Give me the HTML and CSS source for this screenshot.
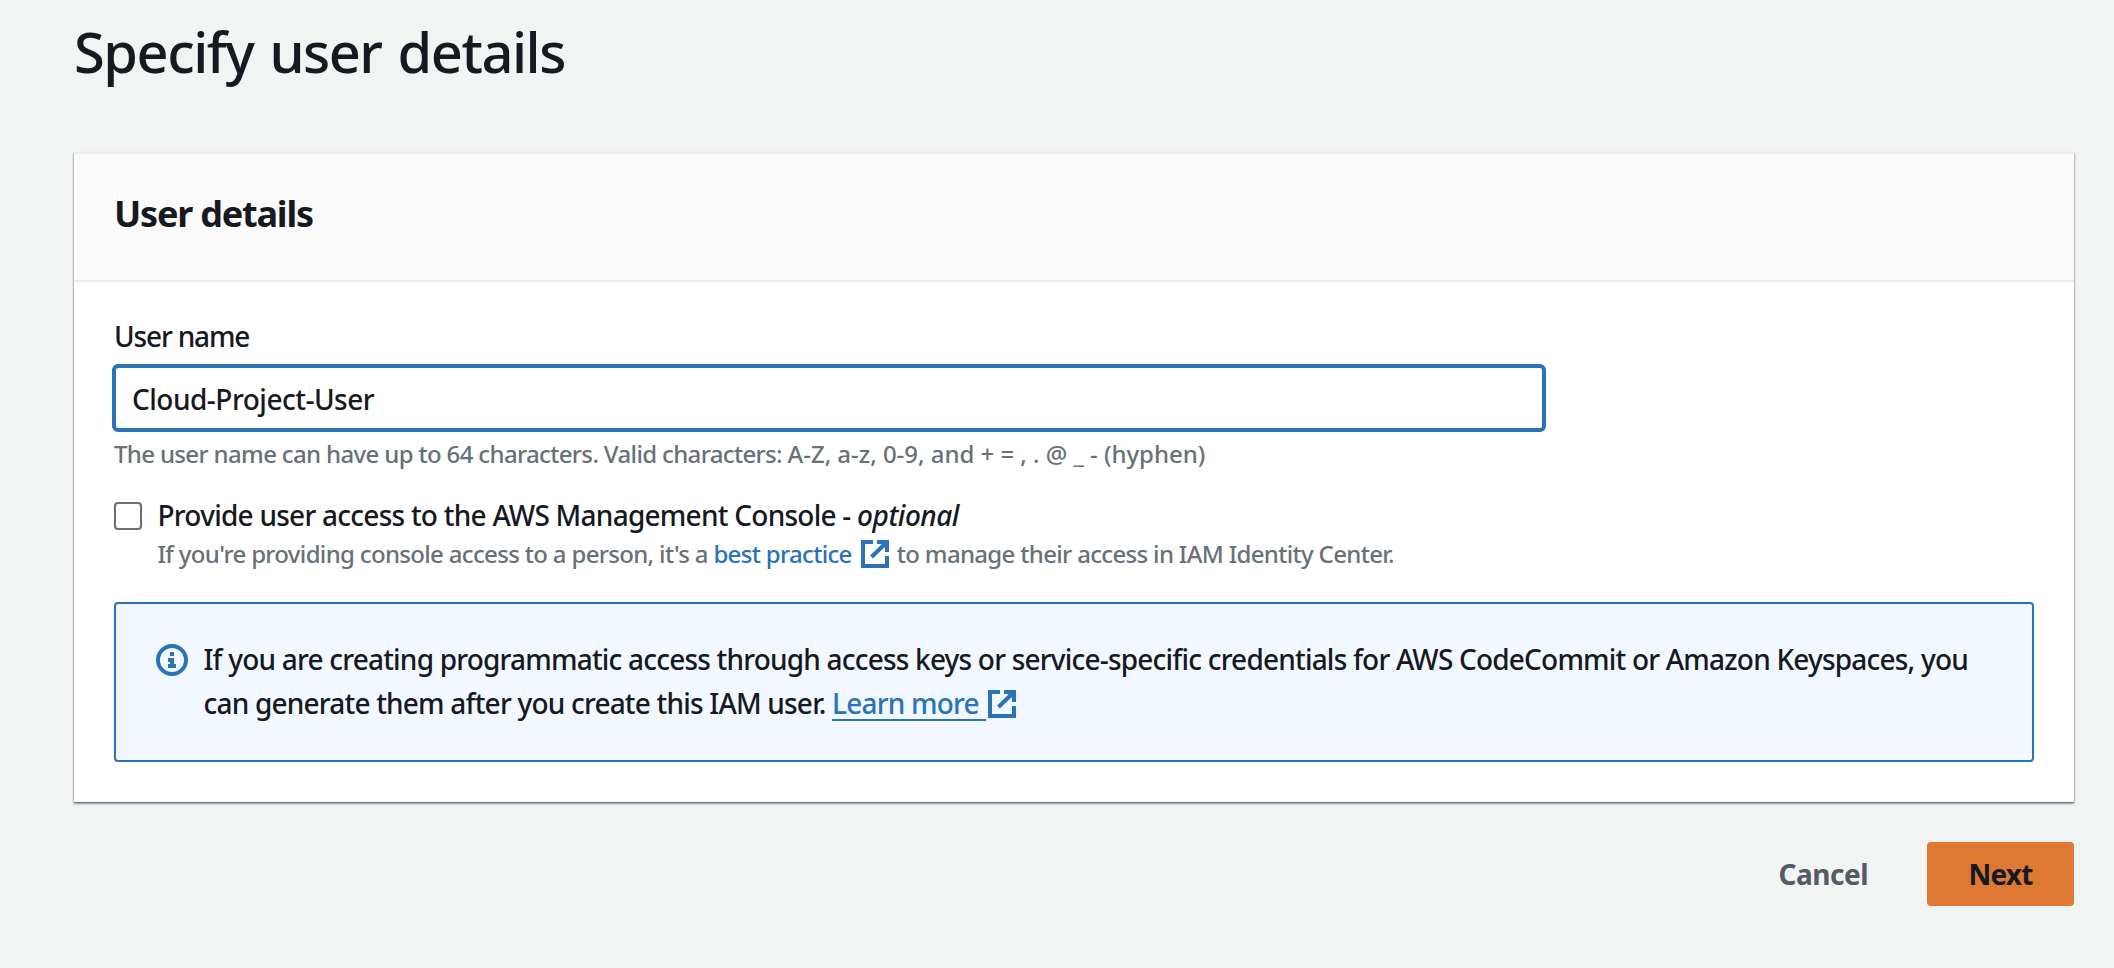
FILE: index.html
```html
<!DOCTYPE html>
<html lang="en">
<head>
<meta charset="utf-8">
<title>Specify user details</title>
<link rel="stylesheet" href="styles.css">
</head>
<body>
<main class="page">
  <h1 class="page-title">Specify user details</h1>
  <section class="card">
    <header class="card-header"><h2 class="card-title">User details</h2></header>
    <div class="card-body">
      <label class="field-label" for="username">User name</label>
      <input class="field-input" id="username" type="text" value="Cloud-Project-User">
      <p class="field-hint">The user name can have up to 64 characters. Valid characters: <span class="charset">A-Z, a-z, 0-9, and + = , . @ _ - (hyphen)</span></p>
      <div class="option">
        <span class="checkbox" role="checkbox" aria-checked="false"></span>
        <div class="option-text">
          <div class="option-label">Provide user access to the AWS Management Console - <em class="optional">optional</em></div>
          <div class="option-desc">If you're providing console access to a person, it's a <a class="link" href="#">best practice</a><svg class="external" viewBox="0 0 28 28"><path d="M12 2H2V26H26V16M16 2H26V12M26 2L10.500 17" fill="none" stroke="currentColor" stroke-width="4"/><path d="M19 3h6v6z" fill="currentColor"/></svg>to manage their access in IAM Identity Center.</div>
        </div>
      </div>
      <div class="alert">
        <svg class="info" viewBox="0 0 32 32"><circle cx="16" cy="16" r="14" fill="none" stroke="currentColor" stroke-width="4"/><path d="M14 8h4v4h-4zM12 14h6v6h2v4h-8v-4h2v-2h-2z" fill="currentColor"/></svg>
        <p class="alert-text">If you are creating programmatic access through access keys or service-specific credentials for AWS CodeCommit or Amazon Keyspaces, you<br>can generate them after you create this IAM user. <a class="link link-underlined" href="#">Learn more</a><svg class="external external-alert" viewBox="0 0 28 28"><path d="M12 2H2V26H26V16M16 2H26V12M26 2L10.500 17" fill="none" stroke="currentColor" stroke-width="4"/><path d="M19 3h6v6z" fill="currentColor"/></svg></p>
      </div>
    </div>
  </section>
  <footer class="actions">
    <button class="btn btn-link" type="button">Cancel</button>
    <button class="btn btn-primary" type="button">Next</button>
  </footer>
</main>
</body>
</html>
```
FILE: styles.css
```css
* { box-sizing: border-box; }

body {
  margin: 0;
  background: #f2f3f3;
  color: #16191f;
  font: 500 28px/44px "Noto Sans", "Open Sans", sans-serif;
}

h1, h2, p { margin: 0; }

.page { padding: 15px 40px 0 74px; }

.page-title {
  font-size: 56px;
  font-weight: 500;
  line-height: 72px;
  letter-spacing: -1.5px;
  word-spacing: 3px;
}

.card {
  height: 650px;
  margin-top: 65px;
  background: #fff;
  border-top: 2px solid #eaeded;
  box-shadow: 0 2px 2px 0 rgba(0, 28, 54, .3), 1px 1px 2px 0 rgba(0, 28, 54, .15), -1px 1px 2px 0 rgba(0, 28, 54, .15), 0 1px 1px 0 rgba(0, 28, 54, .25);
}

.card-header {
  height: 128px;
  padding: 38px 40px 0;
  background: #fafafa;
  border-bottom: 2px solid #eaeded;
}

.card-title {
  font-size: 36px;
  font-weight: 700;
  line-height: 44px;
  letter-spacing: -1.2px;
}

.card-body { padding: 32px 40px 40px; }

.field-label {
  display: block;
  letter-spacing: -1.15px;
}

.field-input {
  display: block;
  width: 1434px;
  height: 68px;
  margin: 6px 0 0 -2px;
  padding: 1px 16px 0;
  border: 4px solid #2a73b8;
  border-radius: 6px;
  outline: none;
  background: #fff;
  color: inherit;
  font: inherit;
  letter-spacing: -.5px;
}

.field-hint {
  margin-top: 6px;
  color: #687078;
  font-size: 24px;
  line-height: 32px;
  letter-spacing: -.65px;
}

.charset { letter-spacing: -.03px; }

.option {
  display: flex;
  gap: 15.5px;
  margin-top: 23px;
}

.checkbox {
  width: 28px;
  height: 28px;
  margin-top: 9px;
  border: 2px solid #687078;
  border-radius: 4px;
  background: #fff;
}

.option-label { letter-spacing: -.75px; }

.optional { letter-spacing: -.5px; }

.option-desc {
  margin-top: 1px;
  color: #687078;
  font-size: 24px;
  line-height: 32px;
  letter-spacing: -.67px;
  white-space: nowrap;
}

.link {
  color: #2a73b8;
  text-decoration: none;
}

.external {
  width: 28px;
  height: 28px;
  margin: 0 8px 0 9px;
  color: #2a73b8;
  vertical-align: -5px;
}

.alert {
  display: flex;
  gap: 15.5px;
  height: 160px;
  margin-top: 32px;
  padding: 33px 40px 0;
  border: 2px solid #2a73b8;
  border-radius: 4px;
  background: #f1f8ff;
}

.info {
  flex: none;
  width: 32px;
  height: 32px;
  margin-top: 7px;
  color: #2a73b8;
}

.alert-text {
  letter-spacing: -.8px;
  white-space: nowrap;
}

.link-underlined {
  padding-right: 7px;
  background: linear-gradient(#2a73b8, #2a73b8) 0 calc(100% - 1px) / 100% 2px no-repeat;
}

.external-alert { margin-left: 2px; vertical-align: -4px; }

.actions {
  display: flex;
  justify-content: flex-end;
  gap: 19px;
  margin-top: 40px;
}

.btn {
  height: 64px;
  padding: 0 40px;
  border: 0;
  border-radius: 4px;
  color: #16191f;
  font: 700 28px/44px "Noto Sans", "Open Sans", sans-serif;
}

.btn-link {
  background: transparent;
  color: #545b64;
  letter-spacing: -.5px;
}

.btn-primary {
  width: 147px;
  background: #df7833;
  letter-spacing: -.8px;
}
```
